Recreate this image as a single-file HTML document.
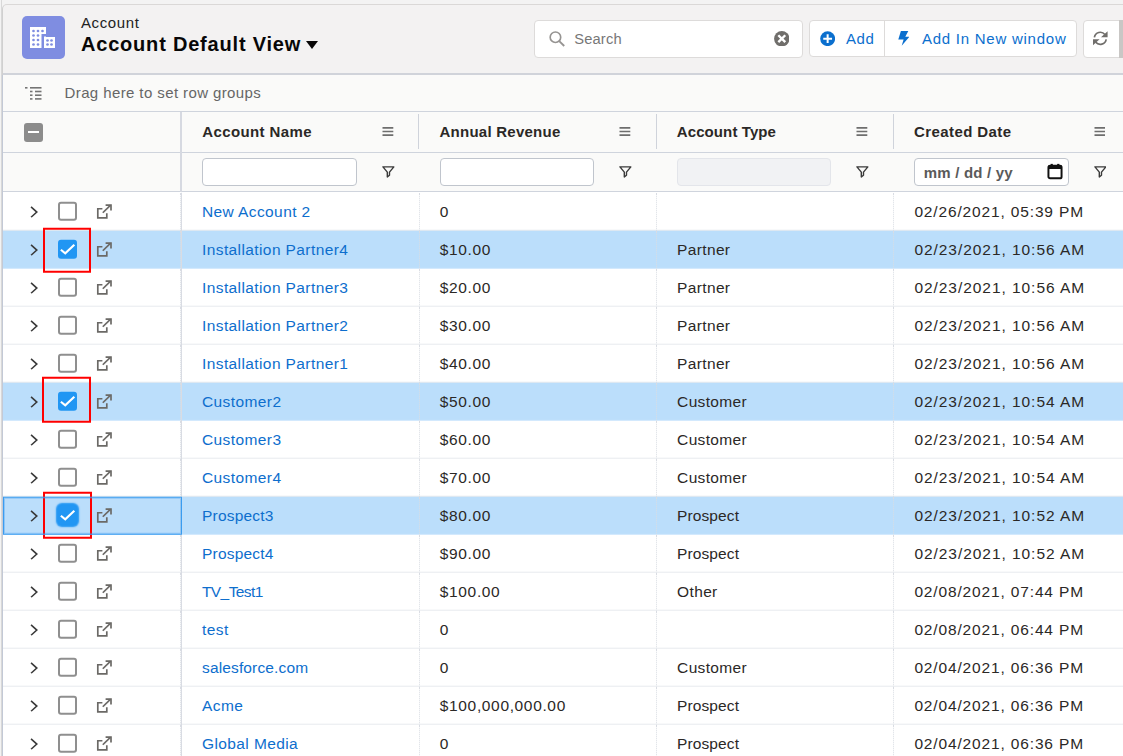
<!DOCTYPE html>
<html lang="en">
<head>
<meta charset="utf-8">
<title>Account Default View</title>
<style>
*{box-sizing:border-box;margin:0;padding:0}
html,body{width:1123px;height:756px;overflow:hidden;background:#f3f2f2;font-family:"Liberation Sans",Arial,sans-serif;color:#181818}
#page{position:absolute;left:0;top:0;width:1123px;height:756px;overflow:hidden;background:#f3f3f3}
#card{position:absolute;left:2px;top:4px;width:1140px;height:800px;border:1px solid #d0d0d0;border-top-color:#dad8d7;border-radius:5px 0 0 0;background:#f3f2f2}
#ol{position:absolute;left:1px;top:0;width:1px;height:756px;background:#d8d8d8}
#hdr{position:absolute;left:0;top:0;width:100%;height:70px;border-bottom:2px solid #d0d3da}
#ico{position:absolute;left:19px;top:11px;width:42.5px;height:43px;border-radius:5px;background:#7f8de1}
#ico svg{position:absolute;left:8px;top:11px}
#sub{position:absolute;left:78px;top:9px;font-size:15px;line-height:18px;letter-spacing:.6px;color:#222}
#ttl{position:absolute;left:78px;top:25px;font-size:20px;line-height:28px;font-weight:700;color:#080707;white-space:nowrap;letter-spacing:.8px}
#ttl i{display:inline-block;width:0;height:0;border-left:6px solid transparent;border-right:6px solid transparent;border-top:8px solid #080707;margin-left:5px;vertical-align:2.1px}
#search{position:absolute;left:531.4px;top:15px;width:269px;height:37.5px;border:1px solid #dddbda;border-radius:4px;background:#fff}
#search span{position:absolute;left:38.9px;top:8.5px;font-size:14.7px;line-height:18px;color:#777;letter-spacing:.15px}
#search svg.mag{position:absolute;left:14px;top:10px}
#search svg.clr{position:absolute;left:238.2px;top:10px}
#bg1{position:absolute;left:806px;top:15px;width:268px;height:37px;border:1px solid #dddbda;border-radius:4px;background:#fff}
#bg1 .dv{position:absolute;left:74.3px;top:0;width:1px;height:35px;background:#dddbda}
#bg1 span{position:absolute;top:8.5px;font-size:15px;line-height:18px;color:#0b6fce;white-space:nowrap}
#bg2{position:absolute;left:1079.5px;top:15px;width:40px;height:37.5px;border:1px solid #dddbda;border-radius:4px 0 0 4px;background:#fff}
#sb{position:absolute;left:1116.2px;top:15px;width:8px;height:37.5px;background:#c9c7c5}
#grid{position:absolute;left:0;top:70px;width:1140px;height:700px;background:#fff}
#gl{position:absolute;left:-1px;top:70px;width:1px;height:700px;background:#c3c9d6;z-index:9}
#rg{position:absolute;left:0;top:0;width:100%;height:37px;background:#fafaf9;border-bottom:1px solid #cfd4dd}
#rg span{position:absolute;left:61.5px;top:9px;font-size:15px;line-height:18px;color:#666;letter-spacing:.4px;white-space:nowrap}
#rg svg{position:absolute;left:22px;top:12px}
#hr{position:absolute;left:0;top:37px;width:100%;height:41px;background:#fafaf9;border-bottom:1px solid #cfd4dd}
#fr{position:absolute;left:0;top:78px;width:100%;height:39px;background:#fafaf9;border-bottom:1px solid #cfd4dd}
.hc{position:absolute;top:0;height:40px;width:237.3px}
.hc b{position:absolute;left:21.2px;top:11px;font-size:15px;line-height:18px;font-weight:700;color:#2b2826;white-space:nowrap;letter-spacing:.25px}
.hc .sep{position:absolute;left:0;top:2.4px;width:1px;height:35px;background:#cfd3db}
.hc svg.menu{position:absolute;left:200.8px;top:15.3px}
.fc{position:absolute;top:0;height:38px;width:237.3px}
.fc .in{position:absolute;left:21.3px;top:5px;width:154.5px;height:28px;border:1px solid #c0c5cd;border-radius:4px;background:#fff}
.fc .in.dis{background:#f1f2f4;border-color:#e3e5ea}
.fc .dt{position:absolute;left:8.6px;top:4px;font-size:15px;line-height:19px;font-weight:700;color:#5a5a5a;white-space:nowrap;width:89.6px;overflow:hidden;letter-spacing:.2px}
.fc svg.cal{position:absolute;left:131.7px;top:4.4px}
.fc svg.filt{position:absolute;left:200.8px;top:13.2px}
#hcb{position:absolute;left:21.3px;top:10.9px;width:18.8px;height:18.8px;border-radius:3px;background:#8c8c8c}
#hcb:after{content:"";position:absolute;left:4.2px;top:8.2px;width:10.5px;height:2.3px;background:#fff}
#pl1{position:absolute;left:177px;top:37px;width:2px;height:80px;background:#d6d9e1;z-index:6}
#pl2{position:absolute;left:178px;top:0;width:1px;height:600px;background:#d9dce3;z-index:6}
#body{position:absolute;left:0;top:117px;width:100%;height:600px;transform:translateY(.75px)}
.row{position:absolute;left:0;width:100%;height:38px;border-bottom:1px solid #e2e5ea;background:#fff}
.row.sel{background:#bbdefb;border-bottom-color:#c2e1fb}
.c{position:absolute;top:0;height:38px;border-right:1px dotted #d9dce3;color:#2b2826;font-size:15.5px;line-height:37px;white-space:nowrap}
.c0{left:0;width:178px}
.c1{left:179px;width:237.8px}
.c2{left:416.8px;width:237.3px}
.c3{left:654.1px;width:237.3px}
.c4{left:891.4px;width:240px;border-right:0}
.c a,.c span{position:absolute;left:20px;top:-.5px}
.c a{color:#0d6ecd;letter-spacing:.4px}
.c2 span{letter-spacing:.65px}
.c3 span{letter-spacing:.35px}
.c4 span{letter-spacing:.95px}
.c0 svg.chev{position:absolute;left:26.6px;top:12.8px}
.c0 svg.ext{position:absolute;left:93px;top:10.9px}
.c0 .cb{position:absolute;left:54.6px;top:9.3px;width:19.2px;height:19.2px;border:2px solid #8f8f8f;border-radius:3px;background:#fff}
.c0 .cb.on{border:0;background:#2196f3}
.c0 .cb.on svg{position:absolute;left:0;top:0}
.c0 .cb.glow{box-shadow:0 0 1.5px 2px #2196f3;border-radius:4px}
.c0 .red{position:absolute;left:39.7px;top:-2.8px;width:49px;height:45.8px;border:2px solid #f00;z-index:5}
.row.foc .c0:after{content:"";position:absolute;box-sizing:border-box;left:0;top:-.4px;width:179px;height:38px;z-index:7;border:1px solid #3a9cf0;box-shadow:inset 0 0 0 1px rgba(58,156,240,.35)}
</style>
</head>
<body>
<div id="page">
<div id="ol"></div>
<div id="card">
  <div id="hdr">
    <div id="ico"><svg width="27" height="22" viewBox="0 0 27 22"><rect x="0" y="0" width="16" height="21" fill="#fff"/><rect x="11" y="0" width="5" height="0" fill="#7f8de1"/><rect x="14" y="10" width="11" height="11" fill="#fff"/><rect x="12" y="7" width="15" height="2.5" fill="#7f8de1"/><rect x="11.5" y="7" width="2.5" height="15" fill="#7f8de1"/><g fill="#7f8de1"><circle cx="3.5" cy="4" r="1.35"/><circle cx="8" cy="4" r="1.35"/><circle cx="12.5" cy="4" r="1.35"/><circle cx="3.5" cy="8.5" r="1.35"/><circle cx="8" cy="8.5" r="1.35"/><circle cx="3.5" cy="13" r="1.35"/><circle cx="8" cy="13" r="1.35"/><circle cx="3.5" cy="17.5" r="1.35"/><circle cx="8" cy="17.5" r="1.35"/><circle cx="17.5" cy="13.5" r="1.35"/><circle cx="21.5" cy="13.5" r="1.35"/><circle cx="17.5" cy="17.5" r="1.35"/><circle cx="21.5" cy="17.5" r="1.35"/></g></svg></div>
    <div id="sub">Account</div>
    <div id="ttl">Account Default View<i></i></div>
    <div id="search"><svg class="mag" width="16" height="15.6" viewBox="0 0 16 16"><circle cx="6.4" cy="6.4" r="5.4" fill="none" stroke="#969492" stroke-width="1.7"/><path d="M10.3 10.3 L15.4 15.4" stroke="#969492" stroke-width="1.9"/></svg><span>Search</span><svg class="clr" width="15.6" height="15.4" viewBox="0 0 16 16"><circle cx="8" cy="8" r="8" fill="#706e6b"/><path d="M4.4 4.4 L11.6 11.6 M11.6 4.4 L4.4 11.6" stroke="#fff" stroke-width="2.5"/></svg></div>
    <div id="bg1">
      <svg style="position:absolute;left:10px;top:10px" width="15.3" height="15.3" viewBox="0 0 16 16"><circle cx="8" cy="8" r="7.8" fill="#0b6fce"/><path d="M8 3.4 V12.6 M3.4 8 H12.6" stroke="#fff" stroke-width="2.1"/></svg>
      <span style="left:36px;letter-spacing:.6px">Add</span>
      <div class="dv"></div>
      <svg style="position:absolute;left:87.6px;top:10.2px" width="11.5" height="15" viewBox="0 0 11.5 15"><path d="M2.9 0 H10.3 L7.3 5.8 H11.3 L3.7 14.7 L5.6 8.4 H0.3 Z" fill="#0b6fce"/></svg>
      <span style="left:112px;letter-spacing:.75px">Add In New window</span>
    </div>
    <div id="bg2"><svg style="position:absolute;left:9.8px;top:10.3px" width="14.6" height="14.6" viewBox="0 0 14.6 14.6"><g fill="none" stroke="#706e6b" stroke-width="1.7"><path d="M1.38 6.3 A6 6 0 0 1 11.9 3.45"/><path d="M13.2 8.3 A6 6 0 0 1 2.7 11.15"/></g><path d="M14.6 0.3 V6.3 H8 Z M0 14.3 V8.3 H6.6 Z" fill="#706e6b"/></svg></div>
    <div id="sb"></div>
  </div>
  <div id="gl"></div>
  <div id="grid">
    <div id="rg"><svg width="17" height="13" viewBox="0 0 17 13"><g fill="#747474"><rect x="0" y="0" width="2.5" height="1.6"/><rect x="5" y="0" width="11.5" height="1.6"/><rect x="5" y="3.7" width="2.5" height="1.6"/><rect x="10" y="3.7" width="6.5" height="1.6"/><rect x="5" y="7.4" width="2.5" height="1.6"/><rect x="10" y="7.4" width="6.5" height="1.6"/><rect x="5" y="11.1" width="2.5" height="1.6"/><rect x="10" y="11.1" width="6.5" height="1.6"/></g></svg><span>Drag here to set row groups</span></div>
    <div id="hr">
      <div id="hcb"></div>
      <div class="hc" style="left:178px"><b style="letter-spacing:.4px">Account Name</b><svg class="menu" viewBox="0 0 12 10" width="11.8" height="9"><path d="M0 1H12M0 5H12M0 9H12" stroke="#6e6e6e" stroke-width="1.75" fill="none"/></svg></div>
      <div class="hc" style="left:415.3px"><div class="sep"></div><b>Annual Revenue</b><svg class="menu" viewBox="0 0 12 10" width="11.8" height="9"><path d="M0 1H12M0 5H12M0 9H12" stroke="#6e6e6e" stroke-width="1.75" fill="none"/></svg></div>
      <div class="hc" style="left:652.6px"><div class="sep"></div><b style="letter-spacing:.1px">Account Type</b><svg class="menu" viewBox="0 0 12 10" width="11.8" height="9"><path d="M0 1H12M0 5H12M0 9H12" stroke="#6e6e6e" stroke-width="1.75" fill="none"/></svg></div>
      <div class="hc" style="left:889.9px"><div class="sep"></div><b style="letter-spacing:.4px">Created Date</b><svg class="menu" viewBox="0 0 12 10" width="11.8" height="9"><path d="M0 1H12M0 5H12M0 9H12" stroke="#6e6e6e" stroke-width="1.75" fill="none"/></svg></div>
    </div>
    <div id="fr">
      <div class="fc" style="left:178px"><div class="in"></div><svg class="filt" viewBox="0 0 14 13" width="12.8" height="11.8"><path d="M1 1 H13 L8.2 6.8 V10.2 L5.8 12 V6.8 Z" fill="none" stroke="#3a3a3a" stroke-width="1.55" stroke-linejoin="round"/></svg></div>
      <div class="fc" style="left:415.3px"><div class="in"></div><svg class="filt" viewBox="0 0 14 13" width="12.8" height="11.8"><path d="M1 1 H13 L8.2 6.8 V10.2 L5.8 12 V6.8 Z" fill="none" stroke="#3a3a3a" stroke-width="1.55" stroke-linejoin="round"/></svg></div>
      <div class="fc" style="left:652.6px"><div class="in dis"></div><svg class="filt" viewBox="0 0 14 13" width="12.8" height="11.8"><path d="M1 1 H13 L8.2 6.8 V10.2 L5.8 12 V6.8 Z" fill="none" stroke="#3a3a3a" stroke-width="1.55" stroke-linejoin="round"/></svg></div>
      <div class="fc" style="left:889.9px"><div class="in date"><span class="dt">mm / dd / yyyy</span><svg class="cal" width="16" height="16.4" viewBox="0 0 14 15"><rect x="1" y="2.5" width="12" height="11.5" rx="1.5" fill="none" stroke="#111" stroke-width="1.8"/><rect x="1" y="2" width="12" height="3.5" fill="#111"/><rect x="3" y="0.8" width="2" height="2" fill="#111"/><rect x="9" y="0.8" width="2" height="2" fill="#111"/></svg></div><svg class="filt" viewBox="0 0 14 13" width="12.8" height="11.8"><path d="M1 1 H13 L8.2 6.8 V10.2 L5.8 12 V6.8 Z" fill="none" stroke="#3a3a3a" stroke-width="1.55" stroke-linejoin="round"/></svg></div>
    </div>
    <div id="pl1"></div>
    <div id="body">
<div class="row" style="top:0px"><div class="c c0"><svg class="chev" viewBox="0 0 8 12" width="8.4" height="12.6"><path d="M1 1 L6.5 6 L1 11" fill="none" stroke="#3a3a3a" stroke-width="1.5"/></svg><span class="cb"></span><svg class="ext" viewBox="0 0 16 16" width="16" height="16"><g fill="none" stroke="#6b6966" stroke-width="1.7"><path d="M10.8 9.4 V14.2 H1.8 V5 H6.4"/><path d="M6.8 9 L14.6 1.4"/><path d="M9.6 1.4 H15 V6.8"/></g></svg></div><div class="c c1"><a>New Account 2</a></div><div class="c c2"><span>0</span></div><div class="c c3"><span></span></div><div class="c c4"><span style="letter-spacing:.85px">02/26/2021, 05:39 PM</span></div></div>
<div class="row sel" style="top:38px"><div class="c c0"><svg class="chev" viewBox="0 0 8 12" width="8.4" height="12.6"><path d="M1 1 L6.5 6 L1 11" fill="none" stroke="#3a3a3a" stroke-width="1.5"/></svg><span class="cb on"><svg viewBox="0 0 18.8 18.8" width="19.2" height="19.2"><path d="M2.8 9.8 L7.1 13.3 L16 4.9" fill="none" stroke="#fff" stroke-width="2.1"/></svg></span><svg class="ext" viewBox="0 0 16 16" width="16" height="16"><g fill="none" stroke="#6b6966" stroke-width="1.7"><path d="M10.8 9.4 V14.2 H1.8 V5 H6.4"/><path d="M6.8 9 L14.6 1.4"/><path d="M9.6 1.4 H15 V6.8"/></g></svg><span class="red" style="left:39.8px;top:-3.2px;width:48.6px;height:45.6px"></span></div><div class="c c1"><a>Installation Partner4</a></div><div class="c c2"><span>$10.00</span></div><div class="c c3"><span>Partner</span></div><div class="c c4"><span>02/23/2021, 10:56 AM</span></div></div>
<div class="row" style="top:76px"><div class="c c0"><svg class="chev" viewBox="0 0 8 12" width="8.4" height="12.6"><path d="M1 1 L6.5 6 L1 11" fill="none" stroke="#3a3a3a" stroke-width="1.5"/></svg><span class="cb"></span><svg class="ext" viewBox="0 0 16 16" width="16" height="16"><g fill="none" stroke="#6b6966" stroke-width="1.7"><path d="M10.8 9.4 V14.2 H1.8 V5 H6.4"/><path d="M6.8 9 L14.6 1.4"/><path d="M9.6 1.4 H15 V6.8"/></g></svg></div><div class="c c1"><a>Installation Partner3</a></div><div class="c c2"><span>$20.00</span></div><div class="c c3"><span>Partner</span></div><div class="c c4"><span>02/23/2021, 10:56 AM</span></div></div>
<div class="row" style="top:114px"><div class="c c0"><svg class="chev" viewBox="0 0 8 12" width="8.4" height="12.6"><path d="M1 1 L6.5 6 L1 11" fill="none" stroke="#3a3a3a" stroke-width="1.5"/></svg><span class="cb"></span><svg class="ext" viewBox="0 0 16 16" width="16" height="16"><g fill="none" stroke="#6b6966" stroke-width="1.7"><path d="M10.8 9.4 V14.2 H1.8 V5 H6.4"/><path d="M6.8 9 L14.6 1.4"/><path d="M9.6 1.4 H15 V6.8"/></g></svg></div><div class="c c1"><a>Installation Partner2</a></div><div class="c c2"><span>$30.00</span></div><div class="c c3"><span>Partner</span></div><div class="c c4"><span>02/23/2021, 10:56 AM</span></div></div>
<div class="row" style="top:152px"><div class="c c0"><svg class="chev" viewBox="0 0 8 12" width="8.4" height="12.6"><path d="M1 1 L6.5 6 L1 11" fill="none" stroke="#3a3a3a" stroke-width="1.5"/></svg><span class="cb"></span><svg class="ext" viewBox="0 0 16 16" width="16" height="16"><g fill="none" stroke="#6b6966" stroke-width="1.7"><path d="M10.8 9.4 V14.2 H1.8 V5 H6.4"/><path d="M6.8 9 L14.6 1.4"/><path d="M9.6 1.4 H15 V6.8"/></g></svg></div><div class="c c1"><a>Installation Partner1</a></div><div class="c c2"><span>$40.00</span></div><div class="c c3"><span>Partner</span></div><div class="c c4"><span>02/23/2021, 10:56 AM</span></div></div>
<div class="row sel" style="top:190px"><div class="c c0"><svg class="chev" viewBox="0 0 8 12" width="8.4" height="12.6"><path d="M1 1 L6.5 6 L1 11" fill="none" stroke="#3a3a3a" stroke-width="1.5"/></svg><span class="cb on"><svg viewBox="0 0 18.8 18.8" width="19.2" height="19.2"><path d="M2.8 9.8 L7.1 13.3 L16 4.9" fill="none" stroke="#fff" stroke-width="2.1"/></svg></span><svg class="ext" viewBox="0 0 16 16" width="16" height="16"><g fill="none" stroke="#6b6966" stroke-width="1.7"><path d="M10.8 9.4 V14.2 H1.8 V5 H6.4"/><path d="M6.8 9 L14.6 1.4"/><path d="M9.6 1.4 H15 V6.8"/></g></svg><span class="red" style="left:38.8px;top:-6.1px;width:49px;height:46.3px"></span></div><div class="c c1"><a>Customer2</a></div><div class="c c2"><span>$50.00</span></div><div class="c c3"><span>Customer</span></div><div class="c c4"><span>02/23/2021, 10:54 AM</span></div></div>
<div class="row" style="top:228px"><div class="c c0"><svg class="chev" viewBox="0 0 8 12" width="8.4" height="12.6"><path d="M1 1 L6.5 6 L1 11" fill="none" stroke="#3a3a3a" stroke-width="1.5"/></svg><span class="cb"></span><svg class="ext" viewBox="0 0 16 16" width="16" height="16"><g fill="none" stroke="#6b6966" stroke-width="1.7"><path d="M10.8 9.4 V14.2 H1.8 V5 H6.4"/><path d="M6.8 9 L14.6 1.4"/><path d="M9.6 1.4 H15 V6.8"/></g></svg></div><div class="c c1"><a>Customer3</a></div><div class="c c2"><span>$60.00</span></div><div class="c c3"><span>Customer</span></div><div class="c c4"><span>02/23/2021, 10:54 AM</span></div></div>
<div class="row" style="top:266px"><div class="c c0"><svg class="chev" viewBox="0 0 8 12" width="8.4" height="12.6"><path d="M1 1 L6.5 6 L1 11" fill="none" stroke="#3a3a3a" stroke-width="1.5"/></svg><span class="cb"></span><svg class="ext" viewBox="0 0 16 16" width="16" height="16"><g fill="none" stroke="#6b6966" stroke-width="1.7"><path d="M10.8 9.4 V14.2 H1.8 V5 H6.4"/><path d="M6.8 9 L14.6 1.4"/><path d="M9.6 1.4 H15 V6.8"/></g></svg></div><div class="c c1"><a>Customer4</a></div><div class="c c2"><span>$70.00</span></div><div class="c c3"><span>Customer</span></div><div class="c c4"><span>02/23/2021, 10:54 AM</span></div></div>
<div class="row sel foc" style="top:304px"><div class="c c0"><svg class="chev" viewBox="0 0 8 12" width="8.4" height="12.6"><path d="M1 1 L6.5 6 L1 11" fill="none" stroke="#3a3a3a" stroke-width="1.5"/></svg><span class="cb on glow"><svg viewBox="0 0 18.8 18.8" width="19.2" height="19.2"><path d="M2.8 9.8 L7.1 13.3 L16 4.9" fill="none" stroke="#fff" stroke-width="2.1"/></svg></span><svg class="ext" viewBox="0 0 16 16" width="16" height="16"><g fill="none" stroke="#6b6966" stroke-width="1.7"><path d="M10.8 9.4 V14.2 H1.8 V5 H6.4"/><path d="M6.8 9 L14.6 1.4"/><path d="M9.6 1.4 H15 V6.8"/></g></svg><span class="red" style="left:39.7px;top:-4.8px;width:49px;height:46.3px"></span></div><div class="c c1"><a style="letter-spacing:.2px">Prospect3</a></div><div class="c c2"><span>$80.00</span></div><div class="c c3"><span style="letter-spacing:.1px">Prospect</span></div><div class="c c4"><span>02/23/2021, 10:52 AM</span></div></div>
<div class="row" style="top:342px"><div class="c c0"><svg class="chev" viewBox="0 0 8 12" width="8.4" height="12.6"><path d="M1 1 L6.5 6 L1 11" fill="none" stroke="#3a3a3a" stroke-width="1.5"/></svg><span class="cb"></span><svg class="ext" viewBox="0 0 16 16" width="16" height="16"><g fill="none" stroke="#6b6966" stroke-width="1.7"><path d="M10.8 9.4 V14.2 H1.8 V5 H6.4"/><path d="M6.8 9 L14.6 1.4"/><path d="M9.6 1.4 H15 V6.8"/></g></svg></div><div class="c c1"><a style="letter-spacing:.2px">Prospect4</a></div><div class="c c2"><span>$90.00</span></div><div class="c c3"><span style="letter-spacing:.1px">Prospect</span></div><div class="c c4"><span>02/23/2021, 10:52 AM</span></div></div>
<div class="row" style="top:380px"><div class="c c0"><svg class="chev" viewBox="0 0 8 12" width="8.4" height="12.6"><path d="M1 1 L6.5 6 L1 11" fill="none" stroke="#3a3a3a" stroke-width="1.5"/></svg><span class="cb"></span><svg class="ext" viewBox="0 0 16 16" width="16" height="16"><g fill="none" stroke="#6b6966" stroke-width="1.7"><path d="M10.8 9.4 V14.2 H1.8 V5 H6.4"/><path d="M6.8 9 L14.6 1.4"/><path d="M9.6 1.4 H15 V6.8"/></g></svg></div><div class="c c1"><a style="letter-spacing:-.6px">TV_Test1</a></div><div class="c c2"><span>$100.00</span></div><div class="c c3"><span>Other</span></div><div class="c c4"><span style="letter-spacing:.85px">02/08/2021, 07:44 PM</span></div></div>
<div class="row" style="top:418px"><div class="c c0"><svg class="chev" viewBox="0 0 8 12" width="8.4" height="12.6"><path d="M1 1 L6.5 6 L1 11" fill="none" stroke="#3a3a3a" stroke-width="1.5"/></svg><span class="cb"></span><svg class="ext" viewBox="0 0 16 16" width="16" height="16"><g fill="none" stroke="#6b6966" stroke-width="1.7"><path d="M10.8 9.4 V14.2 H1.8 V5 H6.4"/><path d="M6.8 9 L14.6 1.4"/><path d="M9.6 1.4 H15 V6.8"/></g></svg></div><div class="c c1"><a>test</a></div><div class="c c2"><span>0</span></div><div class="c c3"><span></span></div><div class="c c4"><span style="letter-spacing:.85px">02/08/2021, 06:44 PM</span></div></div>
<div class="row" style="top:456px"><div class="c c0"><svg class="chev" viewBox="0 0 8 12" width="8.4" height="12.6"><path d="M1 1 L6.5 6 L1 11" fill="none" stroke="#3a3a3a" stroke-width="1.5"/></svg><span class="cb"></span><svg class="ext" viewBox="0 0 16 16" width="16" height="16"><g fill="none" stroke="#6b6966" stroke-width="1.7"><path d="M10.8 9.4 V14.2 H1.8 V5 H6.4"/><path d="M6.8 9 L14.6 1.4"/><path d="M9.6 1.4 H15 V6.8"/></g></svg></div><div class="c c1"><a style="letter-spacing:.14px">salesforce.com</a></div><div class="c c2"><span>0</span></div><div class="c c3"><span>Customer</span></div><div class="c c4"><span style="letter-spacing:.85px">02/04/2021, 06:36 PM</span></div></div>
<div class="row" style="top:494px"><div class="c c0"><svg class="chev" viewBox="0 0 8 12" width="8.4" height="12.6"><path d="M1 1 L6.5 6 L1 11" fill="none" stroke="#3a3a3a" stroke-width="1.5"/></svg><span class="cb"></span><svg class="ext" viewBox="0 0 16 16" width="16" height="16"><g fill="none" stroke="#6b6966" stroke-width="1.7"><path d="M10.8 9.4 V14.2 H1.8 V5 H6.4"/><path d="M6.8 9 L14.6 1.4"/><path d="M9.6 1.4 H15 V6.8"/></g></svg></div><div class="c c1"><a>Acme</a></div><div class="c c2"><span>$100,000,000.00</span></div><div class="c c3"><span style="letter-spacing:.1px">Prospect</span></div><div class="c c4"><span style="letter-spacing:.85px">02/04/2021, 06:36 PM</span></div></div>
<div class="row" style="top:532px"><div class="c c0"><svg class="chev" viewBox="0 0 8 12" width="8.4" height="12.6"><path d="M1 1 L6.5 6 L1 11" fill="none" stroke="#3a3a3a" stroke-width="1.5"/></svg><span class="cb"></span><svg class="ext" viewBox="0 0 16 16" width="16" height="16"><g fill="none" stroke="#6b6966" stroke-width="1.7"><path d="M10.8 9.4 V14.2 H1.8 V5 H6.4"/><path d="M6.8 9 L14.6 1.4"/><path d="M9.6 1.4 H15 V6.8"/></g></svg></div><div class="c c1"><a>Global Media</a></div><div class="c c2"><span>0</span></div><div class="c c3"><span style="letter-spacing:.1px">Prospect</span></div><div class="c c4"><span style="letter-spacing:.85px">02/04/2021, 06:36 PM</span></div></div>
<div id="pl2"></div>
    </div>
  </div>
</div>
</div>
</body>
</html>
